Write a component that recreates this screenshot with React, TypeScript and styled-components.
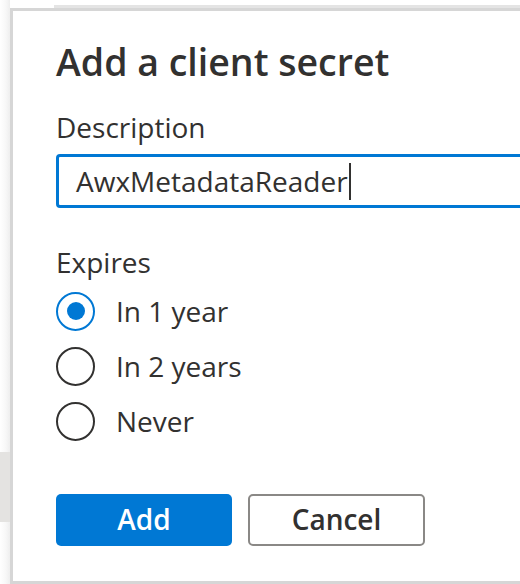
import React from "react";
import styled, { createGlobalStyle } from "styled-components";

const Global = createGlobalStyle`
  html, body { margin: 0; padding: 0; background: #ffffff; }
  body { font-family: "Open Sans", "Noto Sans", "Liberation Sans", sans-serif; color: #323130; overflow: hidden; }
`;

const Page = styled.div`
  display: flex;
  width: 520px;
  height: 584px;
  overflow: hidden;
`;

const Gutter = styled.div`
  width: 10px;
  flex: none;
  display: flex;
  flex-direction: column;
  background: linear-gradient(to right, #ffffff 0%, #f7f7f7 60%, #eeeeee 100%);
`;

const GutterBlock = styled.div`
  margin-top: 452px;
  height: 70px;
  background: #e4e3e1;
`;

const Main = styled.div`
  flex: 1;
  display: flex;
  flex-direction: column;
  min-width: 0;
`;

const TopStrip = styled.div`
  height: 8px;
  flex: none;
  display: flex;
  flex-direction: column;
  justify-content: flex-end;
`;

const TopRule = styled.div`
  margin-left: 44px;
  height: 3px;
  background: #e4e4e4;
`;

const Panel = styled.div`
  flex: 1;
  box-sizing: border-box;
  border-left: 3px solid #d6d6d6;
  border-top: 3px solid #d6d6d6;
  border-bottom: 3px solid #d6d6d6;
  background: #ffffff;
  padding: 27px 0 0 43px;
  display: flex;
  flex-direction: column;
  align-items: flex-start;
`;

const Title = styled.h1`
  margin: 0;
  font-size: 37.5px;
  line-height: 48px;
  font-weight: 600;
  color: #323130;
  white-space: nowrap;
`;

const Label = styled.div<{ $top: number }>`
  margin-top: ${(p) => p.$top}px;
  font-size: 28px;
  line-height: 36px;
  font-weight: 400;
  color: #323130;
`;

const Field = styled.div`
  margin-top: 9px;
  box-sizing: border-box;
  width: 480px;
  height: 54px;
  border: 3px solid #0078d4;
  border-radius: 4px;
  display: flex;
  align-items: center;
  padding-left: 17px;
  font-size: 28px;
  color: #323130;
  white-space: nowrap;
`;

const Caret = styled.span`
  display: inline-block;
  width: 2px;
  height: 37px;
  background: #323130;
  margin-left: 1px;
`;

const RadioGroup = styled.div`
  margin-top: 12px;
  display: flex;
  flex-direction: column;
  gap: 17px;
`;

const RadioRow = styled.div`
  display: flex;
  align-items: center;
  height: 38px;
  gap: 21px;
`;

const Circle = styled.span<{ $checked: boolean }>`
  box-sizing: border-box;
  width: 39px;
  height: 39px;
  border-radius: 50%;
  border: 2px solid ${(p) => (p.$checked ? "#0078d4" : "#323130")};
  display: flex;
  align-items: center;
  justify-content: center;
  flex: none;
`;

const Dot = styled.span`
  width: 18px;
  height: 18px;
  border-radius: 50%;
  background: #0078d4;
`;

const RadioText = styled.span`
  font-size: 28px;
  color: #323130;
`;

const Actions = styled.div`
  margin-top: 54px;
  display: flex;
  gap: 16px;
`;

const Button = styled.button<{ $primary?: boolean }>`
  box-sizing: border-box;
  width: ${(p) => (p.$primary ? 176 : 177)}px;
  height: 52px;
  border-radius: 5px;
  font-family: inherit;
  font-size: 28px;
  font-weight: 600;
  padding: 0 0 2px;
  cursor: pointer;
  background: ${(p) => (p.$primary ? "#0078d4" : "#ffffff")};
  color: ${(p) => (p.$primary ? "#ffffff" : "#323130")};
  border: ${(p) => (p.$primary ? "none" : "2px solid #8a8886")};
`;

const options = ["In 1 year", "In 2 years", "Never"];

export default function App() {
  return (
    <>
      <Global />
      <Page>
        <Gutter>
          <GutterBlock />
        </Gutter>
        <Main>
          <TopStrip>
            <TopRule />
          </TopStrip>
          <Panel>
            <Title>Add a client secret</Title>
            <Label $top={23}>Description</Label>
            <Field>
              AwxMetadataReader
              <Caret />
            </Field>
            <Label $top={36}>Expires</Label>
            <RadioGroup>
              {options.map((o, i) => (
                <RadioRow key={o}>
                  <Circle $checked={i === 0}>{i === 0 && <Dot />}</Circle>
                  <RadioText>{o}</RadioText>
                </RadioRow>
              ))}
            </RadioGroup>
            <Actions>
              <Button $primary>Add</Button>
              <Button>Cancel</Button>
            </Actions>
          </Panel>
        </Main>
      </Page>
    </>
  );
}
